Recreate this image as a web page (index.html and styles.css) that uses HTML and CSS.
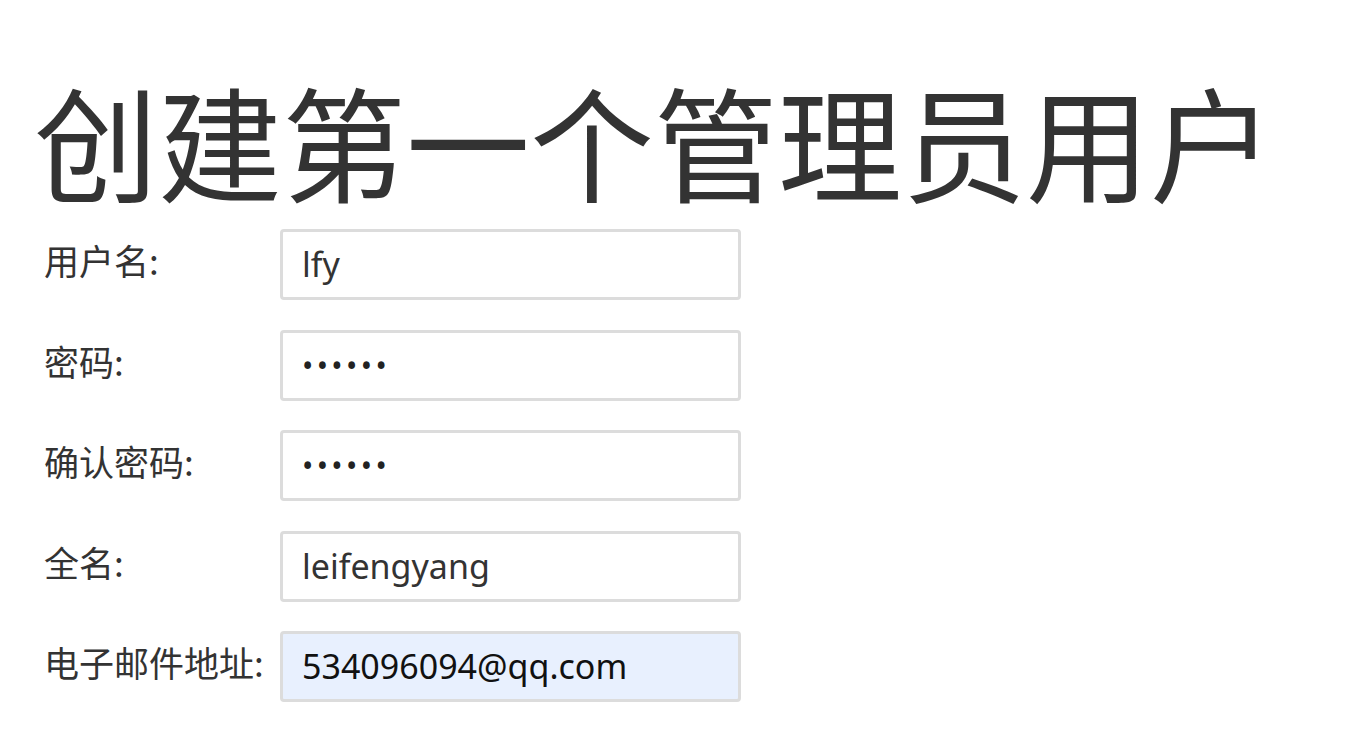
FILE: index.html
```html
<!DOCTYPE html>
<html lang="zh-CN">
<head>
<meta charset="utf-8">
<link rel="stylesheet" href="styles.css">
<title>创建第一个管理员用户</title>
</head>
<body>
<div class="page">
  <h1 class="title">创建第一个管理员用户</h1>
  <form class="form">
    <label class="label">用户名:</label>
    <div class="field">lfy</div>
    <label class="label">密码:</label>
    <div class="field dots">••••••</div>
    <label class="label">确认密码:</label>
    <div class="field dots">••••••</div>
    <label class="label">全名:</label>
    <div class="field">leifengyang</div>
    <label class="label">电子邮件地址:</label>
    <div class="field autofill">534096094@qq.com</div>
  </form>
</div>
</body>
</html>
```
FILE: styles.css
```css
html, body {
  margin: 0;
  padding: 0;
  background: #ffffff;
}
body {
  font-family: "Noto Sans", "Noto Sans CJK SC", sans-serif;
  color: #333333;
}
.page {
  padding: 63px 0 0 34px;
}
.title {
  margin: 0;
  font-family: "Noto Sans CJK SC", sans-serif;
  font-weight: 400;
  font-size: 124px;
  line-height: 152px;
  letter-spacing: 0;
  color: #333333;
}
.form {
  display: grid;
  grid-template-columns: 246px 461px;
  row-gap: 29.6px;
  margin-top: 14px;
}
.label {
  font-family: "Noto Sans CJK SC", sans-serif;
  font-size: 35px;
  line-height: 44px;
  padding-left: 10px;
  padding-top: 9px;
  color: #333333;
  white-space: nowrap;
}
.field {
  box-sizing: border-box;
  height: 71px;
  border: 3px solid #dcdcdc;
  border-radius: 4px;
  padding: 0 19px;
  font-size: 34px;
  line-height: 65px;
  color: #333333;
  background: #ffffff;
}
.dots {
  font-size: 30px;
  letter-spacing: 3.4px;
  color: #222222;
}
.autofill {
  background: #e8f0fe;
  color: #111111;
}
```
